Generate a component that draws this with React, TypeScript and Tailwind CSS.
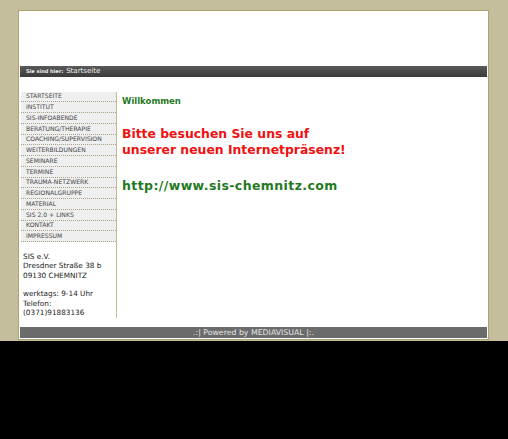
export default function App() {
  const menu = [
    "STARTSEITE",
    "INSTITUT",
    "SIS-INFOABENDE",
    "BERATUNG/THERAPIE",
    "COACHING/SUPERVISION",
    "WEITERBILDUNGEN",
    "SEMINARE",
    "TERMINE",
    "TRAUMA-NETZWERK",
    "REGIONALGRUPPE",
    "MATERIAL",
    "SIS 2.0 + LINKS",
    "KONTAKT",
    "IMPRESSUM",
  ];
  return (
    <div className="min-h-screen bg-black font-['DejaVu_Sans',Verdana,sans-serif]">
      <div className="h-[341px] bg-[#c4be9d] pt-[10px] pl-[18px]">
        <div className="w-[471px] border border-[#ada272] bg-white">
          {/* header */}
          <div className="h-[55px]" />

          {/* breadcrumb */}
          <div className="mx-px flex h-[11px] items-center gap-[3px] bg-gradient-to-b from-[#5a5a5a] to-[#3a3a3a] pl-[6px] text-[#eeeeee]">
            <span className="text-[5px] font-bold leading-none">Sie sind hier:</span>
            <span className="text-[7px] leading-none">Startseite</span>
          </div>

          {/* body */}
          <div className="flex h-[250px] pt-[14.5px]">
            <div className="ml-[2px] h-[226px] w-[96px] border-r border-[#c9bb8e]">
              <ul>
                {menu.map((m) => (
                  <li
                    key={m}
                    className="flex h-[10.75px] items-center border-b border-dotted border-[#a8a087] bg-[#efefef] pl-[5px] text-[6.1px] leading-none text-[#444444]"
                  >
                    {m}
                  </li>
                ))}
              </ul>
              <div className="mt-[10px] pl-[2px] text-[7.3px] leading-[9.33px] text-[#222222]">
                <p>SIS e.V.</p>
                <p>Dresdner Straße 38 b</p>
                <p>09130 CHEMNITZ</p>
                <p>&nbsp;</p>
                <p>werktags: 9-14 Uhr</p>
                <p>Telefon:</p>
                <p>(0371)91883136</p>
              </div>
            </div>

            <div className="pl-[5px] pt-[5px]">
              <h1 className="text-[8.5px] font-bold leading-none text-[#1f7a1f]">Willkommen</h1>
              <p className="mt-[21px] text-[12.4px] font-bold leading-[16px] text-[#f01010]">
                Bitte besuchen Sie uns auf
                <br />
                unserer neuen Internetpräsenz!
              </p>
              <p className="mt-[22px] text-[12.5px] font-bold leading-none tracking-[0.4px] text-[#1f7a1f]">
                http://www.sis-chemnitz.com
              </p>
            </div>
          </div>

          {/* footer */}
          <div className="mx-px flex h-[11px] items-center justify-center bg-[#6b6b6b] text-[7.8px] leading-none text-[#e4e4e4]">
            .:| Powered by MEDIAVISUAL |:.
          </div>
          <div className="h-[1px]" />
        </div>
      </div>
    </div>
  );
}
